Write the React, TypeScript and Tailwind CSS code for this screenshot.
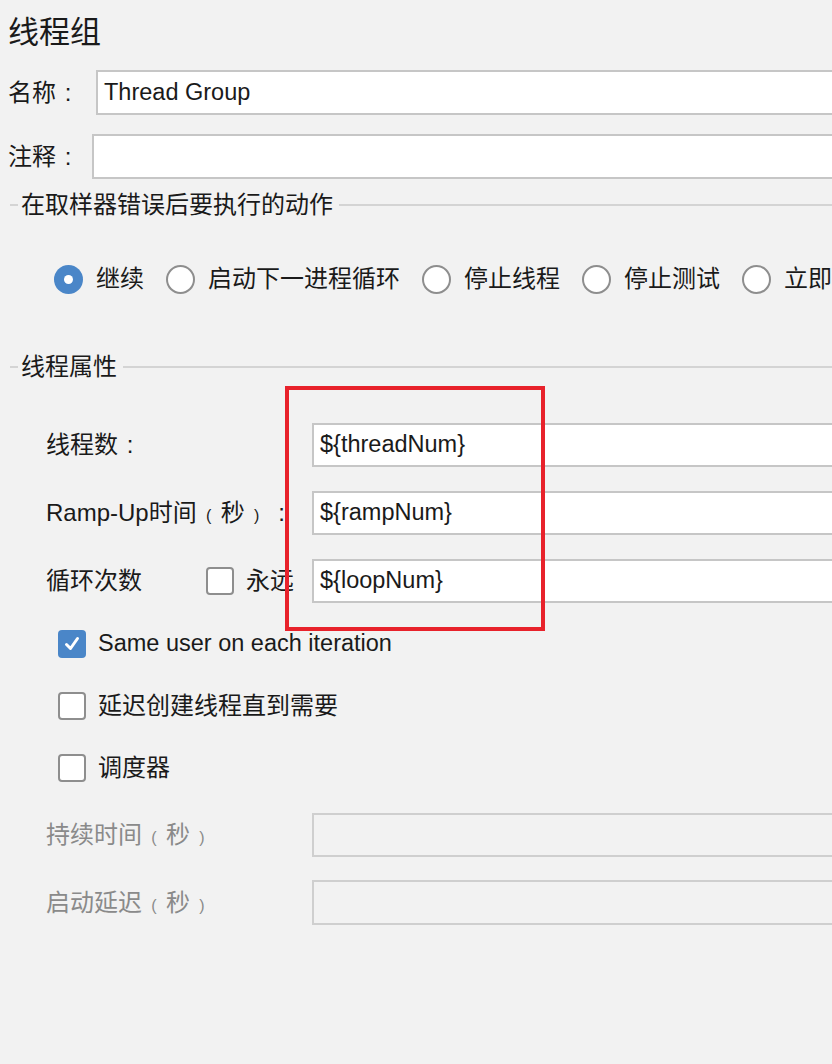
import React from "react";

// full-width punctuation box, glyph centred (mac style)
const Punct = ({ ch, small, className = "" }: { ch: string; small?: boolean; className?: string }) => (
  <span className={`inline-block w-[24px] text-center ${small ? "text-[16px]" : ""} ${className}`}>{ch}</span>
);

const Radio = ({ checked, label }: { checked?: boolean; label: string }) => (
  <div className="flex items-center gap-[13px] shrink-0">
    {checked ? (
      <span className="w-[29px] h-[29px] rounded-full bg-[#4a86c8] flex items-center justify-center">
        <span className="w-[9px] h-[9px] rounded-full bg-white" />
      </span>
    ) : (
      <span className="w-[29px] h-[29px] rounded-full bg-white border-2 border-[#8e8e8e]" />
    )}
    <span className="whitespace-nowrap">{label}</span>
  </div>
);

const CheckBox = ({ checked }: { checked?: boolean }) =>
  checked ? (
    <span className="w-[28px] h-[28px] rounded-[4px] bg-[#4a86c8] flex items-center justify-center shrink-0">
      <svg width="20" height="20" viewBox="0 0 20 20" fill="none">
        <path d="M4.5 10.5 L8.5 14.5 L15.5 4.5" stroke="white" strokeWidth="3" strokeLinecap="round" strokeLinejoin="round" />
      </svg>
    </span>
  ) : (
    <span className="w-[28px] h-[28px] rounded-[4px] bg-white border-2 border-[#8e8e8e] shrink-0" />
  );

const SectionTitle = ({ title }: { title: string }) => (
  <div className="h-[24px] flex items-center">
    <span className="ml-[10px] w-[8px] h-[2px] bg-[#d4d4d4]" />
    <span className="ml-[3px] whitespace-nowrap leading-none">{title}</span>
    <span className="ml-[6px] flex-1 h-[2px] bg-[#d4d4d4]" />
  </div>
);

const Field = ({ value, disabled }: { value?: string; disabled?: boolean }) => (
  <div
    className={`flex-1 -mr-4 h-full border-2 flex items-center px-[6px] text-[23.5px] ${
      disabled ? "bg-[#f2f2f2] border-[#cfcfcf]" : "bg-white border-[#c6c6c6]"
    }`}
  >
    {value}
  </div>
);

export default function App() {
  return (
    <div className="relative w-[832px] h-[1064px] overflow-hidden bg-[#f2f2f2] text-[#1a1a1a] text-[24px] font-['Liberation_Sans','Noto_Sans_CJK_SC',sans-serif]">
      {/* header */}
      <h1 className="h-[64px] flex items-center pl-2 text-[31px] font-normal leading-none">线程组</h1>

      <div className="mt-[6px] h-[45px] flex items-center pl-2">
        <span className="w-[88px] whitespace-nowrap">
          名称<Punct ch=":" />
        </span>
        <Field value="Thread Group" />
      </div>

      <div className="mt-[19px] h-[45px] flex items-center pl-2">
        <span className="w-[84px] whitespace-nowrap">
          注释<Punct ch=":" />
        </span>
        <Field />
      </div>

      {/* sampler error action */}
      <div className="mt-[14px]">
        <SectionTitle title="在取样器错误后要执行的动作" />
      </div>
      <div className="mt-[47px] h-[30px] flex items-center gap-[22px] pl-[54px]">
        <Radio checked label="继续" />
        <Radio label="启动下一进程循环" />
        <Radio label="停止线程" />
        <Radio label="停止测试" />
        <Radio label="立即停止测试" />
      </div>

      {/* thread props */}
      <div className="mt-[61px]">
        <SectionTitle title="线程属性" />
      </div>

      <div className="mt-[44px] h-[44px] flex items-center pl-[46px]">
        <span className="w-[266px] whitespace-nowrap">
          线程数<Punct ch=":" />
        </span>
        <Field value={"${threadNum}"} />
      </div>
      <div className="mt-[24px] h-[44px] flex items-center pl-[46px]">
        <span className="w-[266px] whitespace-nowrap">
          Ramp-Up时间<Punct ch="(" small />秒<Punct ch=")" small />
          <Punct ch=":" className="ml-[1px]" />
        </span>
        <Field value={"${rampNum}"} />
      </div>
      <div className="mt-[24px] h-[44px] flex items-center pl-[46px]">
        <div className="w-[266px] flex items-center">
          <span className="w-[160px]">循环次数</span>
          <CheckBox />
          <span className="ml-[12px]">永远</span>
        </div>
        <Field value={"${loopNum}"} />
      </div>

      <div className="mt-[26px] h-[30px] flex items-center gap-[12px] pl-[58px]">
        <CheckBox checked />
        <span className="text-[23.5px]">Same user on each iteration</span>
      </div>
      <div className="mt-[32px] h-[30px] flex items-center gap-[12px] pl-[58px]">
        <CheckBox />
        <span>延迟创建线程直到需要</span>
      </div>
      <div className="mt-[32px] h-[30px] flex items-center gap-[12px] pl-[58px]">
        <CheckBox />
        <span>调度器</span>
      </div>

      <div className="mt-[30px] h-[44px] flex items-center pl-[46px] text-[#8a8a8a]">
        <span className="w-[266px] whitespace-nowrap">
          持续时间<Punct ch="(" small />秒<Punct ch=")" small />
        </span>
        <Field disabled />
      </div>
      <div className="mt-[23px] h-[45px] flex items-center pl-[46px] text-[#8a8a8a]">
        <span className="w-[266px] whitespace-nowrap">
          启动延迟<Punct ch="(" small />秒<Punct ch=")" small />
        </span>
        <Field disabled />
      </div>

      {/* annotation box */}
      <div className="absolute left-[285px] top-[386px] w-[260px] h-[245px] border-4 border-[#e8222b]" />
    </div>
  );
}
